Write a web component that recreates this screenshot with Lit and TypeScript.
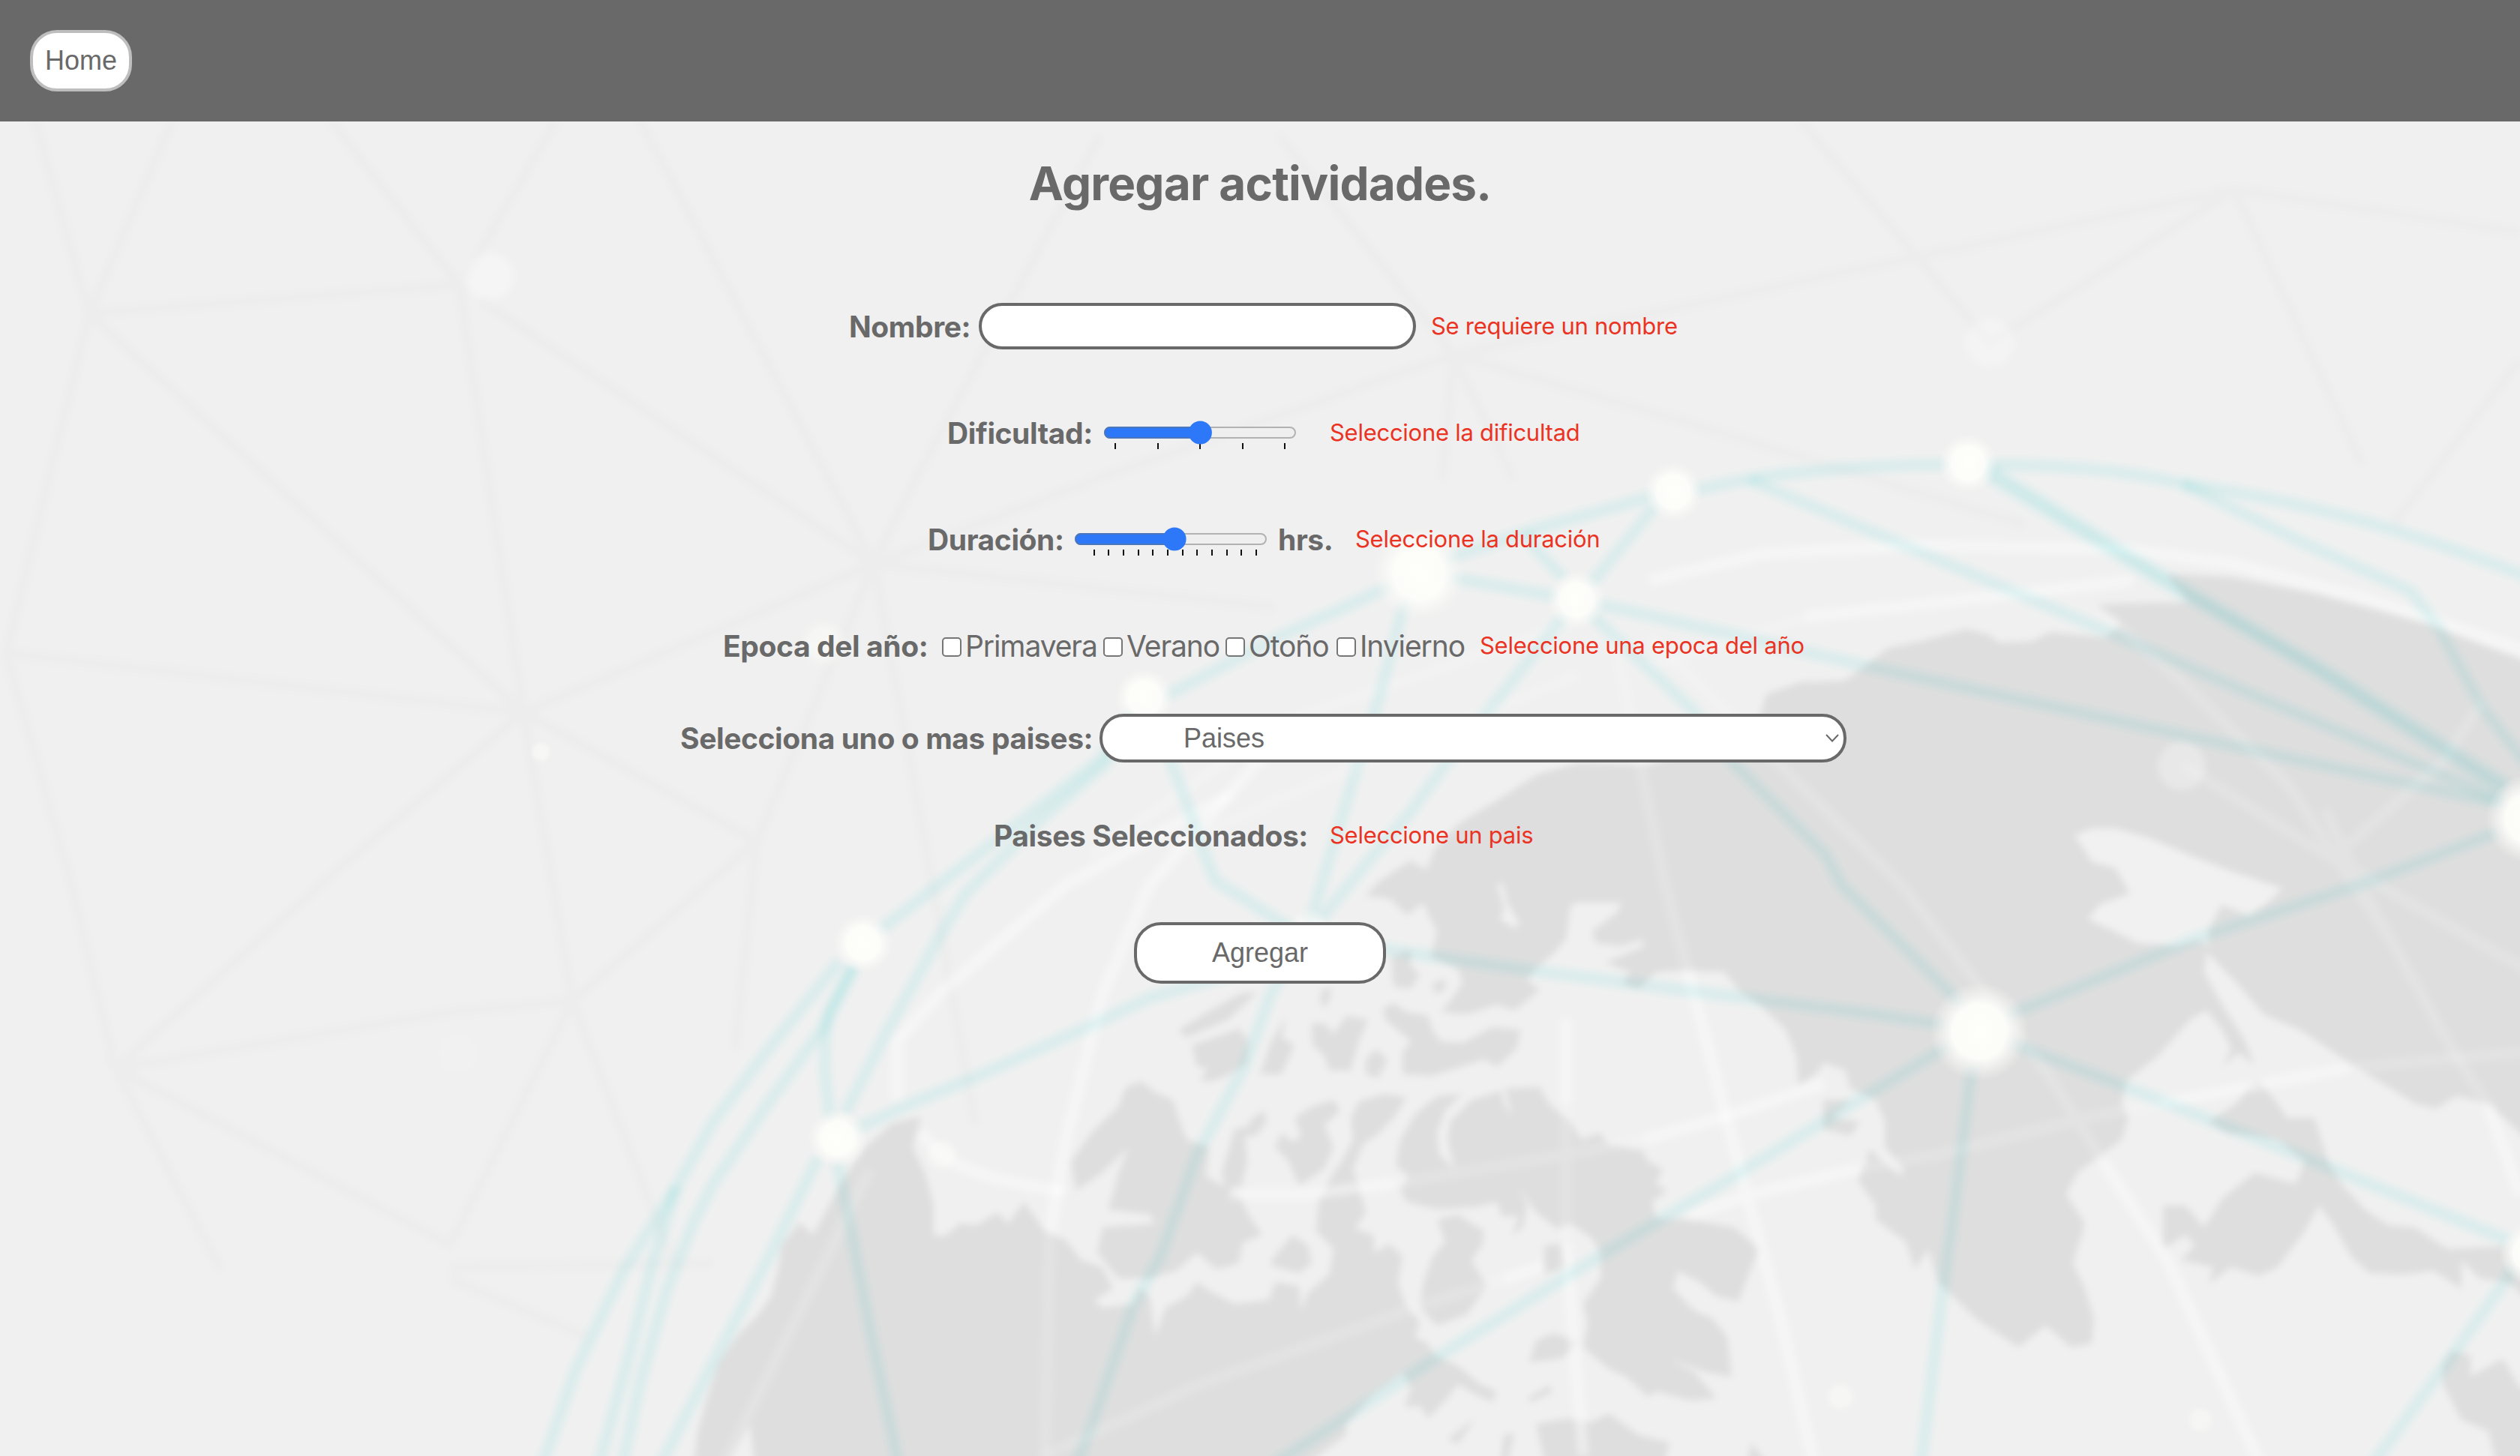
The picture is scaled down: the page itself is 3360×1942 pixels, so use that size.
import { LitElement, html, css, svg } from "lit";
import { customElement, property } from "lit/decorators.js";

/** Decorative globe with a network of connected nodes, drawn behind the form. */
@customElement("globe-backdrop")
class GlobeBackdrop extends LitElement {
  static styles = css`
    :host {
      display: block;
      width: 3360px;
      height: 1942px;
    }
    svg {
      display: block;
    }
    .scene {
      isolation: isolate;
    }
    .mesh {
      fill: none;
      stroke: #ededed;
      stroke-width: 14;
    }
    .land {
      fill: #dedede;
    }
    .water {
      fill: #f1f1f1;
    }
    .meridians {
      fill: none;
      stroke: #ffffff;
      stroke-width: 15;
      stroke-linejoin: round;
    }
    .strong {
      stroke-opacity: 0.42;
    }
    .soft {
      stroke-opacity: 0.17;
    }
    .links {
      fill: none;
      stroke: #e9fbfb;
      stroke-width: 16;
      stroke-linejoin: round;
      mix-blend-mode: multiply;
    }
  `;

  private mesh = [
    "M46 160L119 418L230 160M119 418L612 380L440 160M620 370L742 160M119 418L8 871L698 950L119 418M8 871L90 1160L154 1425",
    "M612 380L698 950L763 1335M640 400L1165 752L853 160M1165 752L698 950L1009 1122L1165 752M698 950L450 1160L154 1425",
    "M154 1425L600 1350L763 1335L1009 1122M763 1335L600 1660L154 1425L295 1695M600 1690L950 1685M763 1335L900 1690M600 1705L782 1783",
    "M1165 752L1222 637L1467 180M1165 752L1467 637L1938 473L1705 180M1938 473L2300 397L2979 253M1938 473L2248 563L2700 700M1938 473L1923 640M1938 473L2018 640",
    "M1165 752L1240 1160L1300 1500M1165 752L1700 810M1009 1122L980 1400M2979 253L2653 457L2400 160M2979 253L3150 620M2979 253L3360 310M3360 480L3190 700",
  ];

  private land = [
    // Eurasia
    "M1821 1195L1853 1199L1876 1221L1898 1204L1904 1219L1916 1243L1908 1277L1944 1292L1950 1311L1933 1336L1921 1350L1956 1353L1996 1340L2019 1348L2053 1321L2036 1306L2048 1292L2071 1272L2088 1253L2094 1209L2099 1204L2163 1204L2155 1218L2122 1243L2128 1258L2160 1262L2191 1253L2191 1263L2140 1284L2174 1297L2163 1311L2185 1319L2208 1297L2243 1294L2300 1297L2318 1321L2346 1340L2381 1374L2395 1408L2398 1447L2421 1433L2432 1418L2461 1428L2467 1452L2501 1467L2513 1496L2513 1530L2538 1559L2535 1569L2516 1554L2492 1532L2489 1549L2477 1574L2501 1608L2501 1627L2541 1656L2553 1693L2571 1666L2584 1710L2614 1739L2633 1758L2691 1797L2728 1768L2761 1797L2789 1792L2792 1758L2780 1719L2764 1685L2780 1632L2755 1593L2770 1564L2829 1520L2838 1491L2829 1472L2835 1442L2878 1408L2920 1360L2942 1348L2963 1374L2975 1399L2963 1423L2985 1404L3006 1421L2994 1389L2963 1340L2939 1297L2942 1270L2982 1311L3018 1353L3067 1374L3141 1423L3220 1472L3248 1479L3275 1462L3318 1472L3380 1530V887L3236 832L3088 792L2977 770L2888 765L2918 803L2792 806L2829 832L2807 850L2733 843L2710 855L2666 857L2651 846L2622 839L2562 855L2518 864L2496 881L2459 908L2400 910L2355 926L2345 960L2200 1020L2104 1017L2050 1033L1992 1070L1947 1097L1914 1130L1902 1160L1880 1148L1837 1177Z",
    // Anatolia and the Mediterranean coast
    "M2945 1496L2982 1472L3009 1438L3037 1472L3049 1491L3086 1491L3095 1520L3104 1549L3122 1579L3153 1613L3184 1634L3220 1637L3263 1666L3380 1660V1740L3343 1710L3306 1705L3282 1681L3282 1719L3245 1695L3202 1700L3159 1698L3135 1676L3110 1632L3092 1608L3073 1642L3037 1690L3012 1702L2975 1690L2945 1712L2951 1690L2908 1681L2926 1661L2914 1647L2884 1666L2884 1608L2914 1608L2939 1637L2963 1598L3006 1564L3061 1579L3073 1549L3037 1520L3006 1515L2969 1511Z",
    "M3257 1822L3269 1802L3294 1807L3294 1836L3337 1812L3360 1851L3400 1860V1962H3331L3318 1909L3282 1894L3257 1846Z",
    "M2431 1467L2467 1467L2443 1491L2480 1496L2467 1515L2431 1506Z",
    // North America
    "M924 1962L930 1909L944 1860L958 1817L982 1783L1010 1754L1028 1729L1038 1690L1042 1661L1066 1630L1084 1647L1105 1608L1123 1574L1154 1530L1189 1498L1228 1489L1217 1530L1235 1569L1245 1608L1245 1647L1259 1649L1280 1632L1302 1634L1330 1617L1344 1632L1358 1613L1365 1603L1379 1622L1393 1642L1421 1654L1442 1681L1470 1690L1484 1719L1459 1734L1470 1744L1512 1739L1519 1719L1533 1729L1540 1783L1554 1744L1582 1729L1596 1710L1617 1724L1646 1739L1692 1734L1700 1710L1732 1715L1735 1749L1744 1724L1772 1700L1778 1666L1755 1642L1758 1603L1778 1564L1789 1549L1804 1520L1801 1491L1812 1469L1847 1459L1876 1464L1858 1491L1835 1515L1818 1525L1804 1559L1812 1583L1821 1617L1807 1639L1832 1647L1832 1671L1853 1659L1870 1676L1864 1710L1873 1739L1893 1763L1887 1783L1904 1792L1913 1807L1944 1822L1973 1846L1996 1856L1990 1870L1967 1860L1944 1846L1930 1865L1904 1892L1893 1875L1873 1877L1881 1851L1870 1831L1830 1860L1795 1899L1795 1914L1730 1962H1007L1000 1899L965 1962Z",
    // Arctic islands
    "M1571 1374L1610 1350L1652 1326L1677 1323L1638 1360L1582 1384ZM1589 1394L1652 1372L1665 1389L1662 1418L1640 1433L1617 1442L1600 1442L1610 1425L1596 1423Z",
    "M1428 1549L1456 1510L1491 1476L1501 1450L1522 1442L1540 1457L1564 1467L1575 1501L1582 1520L1612 1530L1608 1569L1652 1593L1663 1617L1683 1647L1657 1657L1652 1685L1622 1693L1596 1671L1568 1695L1533 1705L1491 1705L1463 1671L1470 1637L1540 1632L1533 1620L1477 1613L1484 1593L1491 1564L1505 1530L1470 1564L1435 1588Z",
    "M1646 1506L1663 1503L1669 1491L1686 1481L1689 1496L1675 1515L1660 1515L1663 1549L1655 1583L1634 1586L1629 1564Z",
    "M1726 1491L1749 1476L1778 1467L1787 1481L1766 1501L1778 1530L1766 1559L1732 1581L1718 1549L1700 1530L1709 1511L1723 1523L1735 1515Z",
    "M1695 1681L1723 1647L1744 1661L1749 1685L1732 1698L1695 1688Z",
    "M1861 1554L1867 1520L1887 1486L1916 1462L1950 1459L1927 1481L1916 1511L1919 1540L1939 1559L1930 1520L1933 1496L1962 1467L2002 1455L2005 1472L2016 1488L2007 1452L2053 1450L2065 1472L2094 1496L2108 1520L2134 1511L2142 1525L2191 1535L2197 1549L2217 1559L2208 1579L2223 1588L2203 1603L2208 1625L2254 1627L2312 1637L2346 1666L2335 1690L2318 1736L2289 1729L2266 1710L2237 1695L2231 1719L2260 1749L2283 1758L2303 1783L2309 1836L2277 1831L2226 1812L2260 1831L2289 1865L2254 1868L2208 1856L2197 1863L2168 1836L2145 1826L2111 1797L2117 1763L2111 1739L2134 1705L2134 1671L2122 1651L2094 1632L2076 1639L2048 1617L2025 1583L2036 1608L2031 1637L2016 1647L2025 1622L2002 1622L1996 1603L1967 1610L1916 1613L1876 1603L1867 1588L1878 1569Z",
    "M1916 1627L1944 1620L1979 1642L1976 1661L1962 1681L1982 1715L1956 1753L1916 1768L1893 1744L1898 1710L1910 1676L1927 1656ZM2059 1661L2082 1659L2088 1690L2059 1700ZM2039 1817L2048 1788L2071 1778L2105 1790L2082 1812Z",
    "M1930 1919L1967 1892L1944 1926ZM2036 1865L2065 1848L2071 1856L2042 1870ZM2048 1899L2088 1892L2122 1897L2145 1885L2185 1914L2226 1924L2216 1962H2062ZM2328 1962L2335 1924L2364 1962ZM2000 1962L2005 1914L2019 1911L2008 1962Z",
    "M1870 1433L1870 1404L1881 1389L1847 1360L1844 1345L1858 1338L1876 1350L1904 1355L1910 1374L1921 1389L1950 1391L1990 1370L2028 1374L2022 1399L1996 1423L1979 1413L1910 1435Z",
    "M1821 1413L1835 1399L1850 1413L1838 1438L1821 1433ZM1749 1365L1766 1365L1778 1379L1795 1355L1824 1360L1812 1389L1801 1428L1772 1428L1766 1408L1750 1394ZM1695 1389L1715 1355L1709 1384L1726 1394L1709 1433L1680 1433Z",
    "M1855 1277L1881 1267L1881 1287L1893 1301L1881 1319L1858 1316ZM1910 1311L1927 1306L1927 1321L1913 1326ZM1762 1320L1776 1318L1770 1342L1760 1340Z",
  ];

  private water = [
    "M2766 1114L2790 1105L2820 1105L2866 1118L2918 1140L2969 1160L3043 1185L3025 1203L2999 1221L2962 1207L2945 1240L2944 1262L2933 1254L2900 1262L2884 1260L2850 1258L2815 1240L2784 1226L2800 1206L2840 1192L2821 1158L2790 1150Z",
    "M1996 1180L2004 1178L2010 1205L2026 1232L2020 1238L2000 1226L2006 1212Z",
  ];

  private strongMeridians = [
    "M1640 1060L1421 1180L1252 1326L1196 1389V1467M1228 1510Q1259 1555 1330 1572T1421 1588",
    "M1700 990L1533 1180L1470 1326L1421 1520L1400 1642",
    "M1640 1593H1743L1860 1578M2191 1520L2295 1491L2432 1445M2088 1360V1470M2088 1660L2111 1942",
    "M2250 1294L2329 1593L2375 1763L2421 1962M2005 1706L2059 1688M2250 1622L2335 1593L2480 1558M2880 1472L3012 1447L3130 1424",
    "M2804 1549L2890 1681L3018 1962M3318 1475L3360 1593M2407 823L2644 797L2844 774",
    "M2200 774L2348 739L2555 727L2829 732L2977 752L3162 800L3380 872",
  ];

  private softMeridians = [
    "M1400 1642L1393 1962M1160 1560L960 1962M1600 1846L1887 1744L2005 1706M1860 1578L2088 1540L2191 1520M2088 1470V1660",
    "M2150 840L2220 1180L2250 1294M2480 1558L2584 1540L2780 1491L2880 1472M3130 1424L3380 1402M2200 850L2535 1180L2731 1433L2804 1549",
    "M3100 1080L3147 1180L3269 1399L3318 1475M2792 806L2918 917L3051 1047L3191 1260M3310 935L3258 1015L3110 1145M2910 1020L3110 1145L3380 1300",
    "M2100 830L1709 963L1454 1141M2104 900L1836 1010L1560 1130M2200 890L2407 823M1393 1942L1600 1846",
  ];

  private links = [
    "M1151 1258L1467 1013L1526 931L1557 927L1710 847L1793 810L1892 763L1946 740L2042 707L2200 663L2231 656L2267 652L2348 636Q2500 616 2659 620Q2800 620 2910 645Q3040 664 3162 698Q3270 730 3380 773",
    "M1526 931L1473 1020L1390 1091L1288 1191L1263 1231L1180 1380L1126 1486",
    "M1119 1282L1021 1404L951 1496L902 1583L831 1695L768 1826L720 1962",
    "M1140 1290L1098 1370L1021 1476L951 1579L926 1627L888 1724L853 1846L828 1962",
    "M902 1583L870 1685L839 1807L796 1962",
    "M1137 1287L1105 1350Q1096 1394 1102 1452L1108 1500",
    "M1091 1544L1021 1685L951 1817L876 1962",
    "M1116 1549L1133 1632L1161 1778L1200 1962",
    "M1117 1518L1147 1503L1210 1474L1309 1433L1456 1367L1533 1331L1640 1300L1746 1250",
    "M1746 1240L1694 1326L1659 1423L1596 1540L1547 1676L1512 1739L1456 1899L1432 1962",
    "M1746 1250L1853 1267L2002 1289L2231 1319L2500 1353L2639 1374",
    "M1746 1250L1709 1231L1620 1174L1607 1141L1582 1070L1562 1018L1526 931",
    "M1746 1232L1811 1018L1838 933L1870 813L1892 763",
    "M1760 1227L1824 1149L1880 1084L1929 1017L1983 950L2081 827L2102 800",
    "M1892 763L2102 800L2200 821L2496 890L2844 966L3339 1073",
    "M2035 710L2048 733L2087 773M2231 656L2200 683L2131 767L2102 800",
    "M2333 640L2555 734L2807 841L3014 931L3339 1069",
    "M2630 618L2659 640L2888 779L3088 895L3339 1056",
    "M2640 618L2670 636L2896 775L3096 891L3345 1048",
    "M2910 645L3073 725L3214 788L3251 837L3310 944L3370 1020",
    "M2102 800L2130 827L2260 950L2313 1020L2434 1140L2455 1180L2602 1326L2639 1374",
    "M2639 1374L2688 1350L2933 1250L3147 1180L3332 1109",
    "M2639 1374L2694 1396L2835 1450L3073 1544L3349 1656",
    "M2639 1374L2628 1433L2608 1593L2590 1724L2560 1962",
    "M2639 1374L2584 1403L2400 1515L2312 1569L2140 1671L1921 1807L1685 1962",
    "M3360 1672L3343 1705L3263 1817L3157 1962",
  ];

  /** x, y, radius, opacity */
  private nodes = [
    [1151, 1258, 40, 1],
    [1117, 1518, 40, 1],
    [1526, 931, 40, 1],
    [1892, 765, 62, 1],
    [2102, 800, 40, 1],
    [2231, 656, 40, 1],
    [2624, 618, 40, 1],
    [2639, 1376, 66, 1],
    [3374, 1092, 60, 1],
    [3374, 1672, 42, 1],
    [1098, 858, 34, 0.5],
    [721, 1003, 16, 0.5],
    [2454, 1863, 22, 0.45],
    [2934, 1894, 20, 0.4],
    [1746, 1240, 30, 0.5],
    [1256, 1540, 24, 0.5],
  ];

  private discs = [
    [653, 369, 32, 0.5],
    [2653, 457, 32, 0.4],
    [2909, 1022, 32, 0.36],
    [610, 1405, 26, 0.15],
  ];

  render() {
    return html`
      <svg width="3360" height="1942" viewBox="0 0 3360 1942" aria-hidden="true">
        <defs>
          <filter
            id="haze"
            filterUnits="userSpaceOnUse"
            x="-40"
            y="100"
            width="3440"
            height="1890"
            color-interpolation-filters="sRGB"
          >
            <feGaussianBlur stdDeviation="4.8"></feGaussianBlur>
          </filter>
          <radialGradient id="glow">
            <stop offset="0" stop-color="#fefefb"></stop>
            <stop offset="0.55" stop-color="#fdfdfa" stop-opacity="0.97"></stop>
            <stop offset="0.78" stop-color="#fafaf7" stop-opacity="0.5"></stop>
            <stop offset="1" stop-color="#f6f6f4" stop-opacity="0"></stop>
          </radialGradient>
        </defs>
        <g class="scene" filter="url(#haze)">
          <rect x="-40" y="100" width="3440" height="1890" fill="#f0f0f0"></rect>
          <g class="mesh">${this.mesh.map((d) => svg`<path d=${d}></path>`)}</g>
          <g class="land">${this.land.map((d) => svg`<path d=${d}></path>`)}</g>
          <g class="water">${this.water.map((d) => svg`<path d=${d}></path>`)}</g>
          <g class="meridians strong">${this.strongMeridians.map((d) => svg`<path d=${d}></path>`)}</g>
          <g class="meridians soft">${this.softMeridians.map((d) => svg`<path d=${d}></path>`)}</g>
          ${this.links.map((d) => svg`<path class="links" d=${d}></path>`)}
          ${this.discs.map(([x, y, r, o]) => svg`<circle cx=${x} cy=${y} r=${r} fill="#fafafa" opacity=${o}></circle>`)}
        </g>
        ${this.nodes.map(([x, y, r, o]) => svg`<circle cx=${x} cy=${y} r=${r} fill="url(#glow)" opacity=${o}></circle>`)}
      </svg>
    `;
  }
}

/** Range control with tick marks. */
@customElement("tick-slider")
class TickSlider extends LitElement {
  @property({ type: Number }) thumb = 128;
  @property({ attribute: false }) ticks: number[] = [];

  static styles = css`
    :host {
      display: block;
      width: 256px;
      height: 38px;
      margin-top: 5px;
    }
    svg {
      display: block;
    }
  `;

  render() {
    return html`
      <svg width="256" height="38" viewBox="0 0 256 38">
        <rect x="1" y="9" width="254" height="14" rx="7" fill="#efefef" stroke="#b2b2b2" stroke-width="2"></rect>
        ${this.ticks.map((x) => svg`<rect x=${x - 1} y="30" width="2" height="8" fill="#101010"></rect>`)}
        <path
          d="M${this.thumb} 9H8a7 7 0 0 0 0 14H${this.thumb}"
          fill="#2d78f8"
          stroke="#4a76bd"
          stroke-width="2"
        ></path>
        <circle cx=${this.thumb} cy="16" r="15.6" fill="#2d78f8"></circle>
      </svg>
    `;
  }
}

@customElement("app-root")
class AppRoot extends LitElement {
  static styles = css`
    :host {
      display: block;
      width: 3360px;
      height: 1942px;
      overflow: hidden;
      position: relative;
      color: #696969;
      font-family: Inter, sans-serif;
    }
    globe-backdrop {
      position: absolute;
      inset: 0;
    }
    .page {
      position: relative;
      display: flex;
      flex-direction: column;
      height: 1942px;
    }
    .bar {
      display: flex;
      align-items: center;
      box-sizing: border-box;
      height: 162px;
      padding: 0 40px;
      background: #696969;
    }
    .btn {
      box-sizing: border-box;
      height: 82px;
      padding: 0;
      border: 4px solid #696969;
      border-radius: 36px;
      background: #fff;
      color: #696969;
      font: 36px "Liberation Sans", Arial, sans-serif;
    }
    .home {
      width: 136px;
      border-color: #bebebe;
    }
    .form {
      display: flex;
      flex-direction: column;
      padding-top: 43px;
    }
    .title {
      margin: 0 0 118px;
      font-size: 62px;
      line-height: 80px;
      font-weight: 700;
      letter-spacing: -0.8px;
      text-align: center;
    }
    .row {
      display: grid;
      align-items: center;
      height: 65px;
      margin-bottom: 77px;
      white-space: nowrap;
    }
    .name {
      grid-template-columns: 173px 603px auto;
      padding-left: 1132px;
    }
    .level {
      grid-template-columns: 209px 301px auto;
      padding-left: 1263px;
    }
    .length {
      grid-template-columns: 196px 271px 103px auto;
      padding-left: 1237px;
    }
    .season {
      grid-template-columns: 292px 215px 163px 148px 191px auto;
      padding-left: 964px;
      margin-bottom: 58px;
    }
    .country {
      grid-template-columns: 559px 996px;
      padding-left: 907px;
      margin-bottom: 65px;
    }
    .chosen {
      grid-template-columns: 448px auto;
      padding-left: 1325px;
      margin-bottom: 83px;
    }
    .label {
      font-size: 39px;
      line-height: 47px;
      font-weight: 700;
      letter-spacing: -0.4px;
    }
    .error {
      margin-top: -1px;
      color: #eb3323;
      font-size: 31px;
      line-height: 38px;
      letter-spacing: -0.27px;
    }
    .text-input {
      box-sizing: border-box;
      width: 583px;
      height: 62px;
      margin: 0 0 1px;
      border: 4px solid #696969;
      border-radius: 31px;
      background: #fff;
    }
    .option {
      display: flex;
      align-items: center;
      gap: 5px;
      font-size: 39px;
      line-height: 47px;
      letter-spacing: -1.1px;
    }
    .box {
      box-sizing: border-box;
      width: 26px;
      height: 26px;
      margin-top: 3px;
      border: 2px solid #767676;
      border-radius: 5px;
      background: #fff;
    }
    .select {
      display: flex;
      align-items: center;
      justify-content: space-between;
      box-sizing: border-box;
      height: 65px;
      padding: 0 6px 0 108px;
      border: 4px solid #696969;
      border-radius: 32px;
      background: #fff;
      font: 36px "Liberation Sans", Arial, sans-serif;
    }
    .submit {
      align-self: center;
      width: 336px;
    }
  `;

  private levelTicks = [15, 72, 128, 185, 241];
  private lengthTicks = [26, 45, 65, 85, 104, 124, 144, 163, 183, 203, 222, 242];
  private seasons = ["Primavera", "Verano", "Otoño", "Invierno"];

  render() {
    return html`
      <globe-backdrop></globe-backdrop>
      <div class="page">
        <header class="bar"><button class="btn home">Home</button></header>
        <main class="form">
          <h1 class="title">Agregar actividades.</h1>
          <div class="row name">
            <span class="label">Nombre:</span>
            <input class="text-input" type="text" aria-label="Nombre" />
            <span class="error">Se requiere un nombre</span>
          </div>
          <div class="row level">
            <span class="label">Dificultad:</span>
            <tick-slider .thumb=${128.3} .ticks=${this.levelTicks}></tick-slider>
            <span class="error">Seleccione la dificultad</span>
          </div>
          <div class="row length">
            <span class="label">Duración:</span>
            <tick-slider .thumb=${133} .ticks=${this.lengthTicks}></tick-slider>
            <span class="label">hrs.</span>
            <span class="error">Seleccione la duración</span>
          </div>
          <div class="row season">
            <span class="label">Epoca del año:</span>
            ${this.seasons.map((s) => html`<span class="option"><span class="box"></span>${s}</span>`)}
            <span class="error">Seleccione una epoca del año</span>
          </div>
          <div class="row country">
            <span class="label">Selecciona uno o mas paises:</span>
            <div class="select">
              <span>Paises</span>
              <svg width="18" height="11" viewBox="0 0 18 11">
                <path d="M1 1L9 9.5L17 1" fill="none" stroke="#696969" stroke-width="2"></path>
              </svg>
            </div>
          </div>
          <div class="row chosen">
            <span class="label">Paises Seleccionados:</span>
            <span class="error">Seleccione un pais</span>
          </div>
          <button class="btn submit">Agregar</button>
        </main>
      </div>
    `;
  }
}
